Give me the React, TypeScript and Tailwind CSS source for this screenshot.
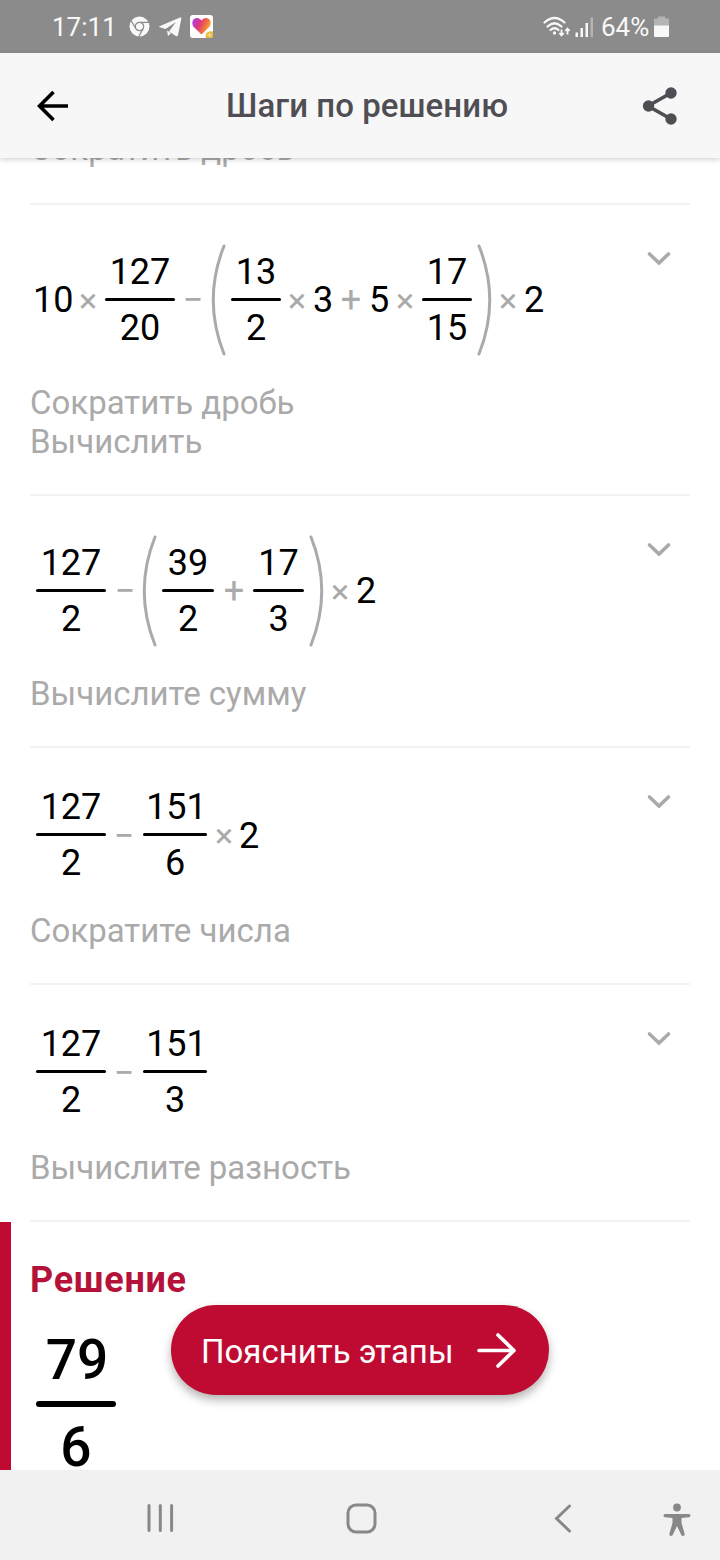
import { ReactNode } from 'react';

type Token =
  | { kind: 'num'; value: string; className: string }
  | { kind: 'op'; value: string; className: string }
  | { kind: 'frac'; top: string; bottom: string; className: string }
  | { kind: 'paren'; side: 'left' | 'right'; className: string };

interface Step {
  tokens: Token[];
  labels: string[];
}

const steps: Step[] = [
  {
    tokens: [
      { kind: 'num', value: '10', className: 'ml-[3px] w-10' },
      { kind: 'op', value: '×', className: 'ml-[5px] w-5' },
      { kind: 'frac', top: '127', bottom: '20', className: 'ml-[7px] w-[70px]' },
      { kind: 'op', value: '−', className: 'ml-2 w-5' },
      { kind: 'paren', side: 'left', className: 'ml-2' },
      { kind: 'frac', top: '13', bottom: '2', className: 'ml-[5px] w-[50px]' },
      { kind: 'op', value: '×', className: 'ml-1.5 w-5' },
      { kind: 'num', value: '3', className: 'ml-1.5 w-5' },
      { kind: 'op', value: '+', className: 'ml-2 w-5' },
      { kind: 'num', value: '5', className: 'ml-2 w-5' },
      { kind: 'op', value: '×', className: 'ml-1.5 w-5' },
      { kind: 'frac', top: '17', bottom: '15', className: 'ml-[7px] w-[50px]' },
      { kind: 'paren', side: 'right', className: 'ml-[5px]' },
      { kind: 'op', value: '×', className: 'ml-1.5 w-5' },
      { kind: 'num', value: '2', className: 'ml-1.5 w-5' },
    ],
    labels: ['Сократить дробь', 'Вычислить'],
  },
  {
    tokens: [
      { kind: 'frac', top: '127', bottom: '2', className: 'ml-1.5 w-[70px]' },
      { kind: 'op', value: '−', className: 'ml-[9px] w-5' },
      { kind: 'paren', side: 'left', className: 'ml-[7px]' },
      { kind: 'frac', top: '39', bottom: '2', className: 'ml-[5px] w-[52px]' },
      { kind: 'op', value: '+', className: 'ml-2.5 w-5' },
      { kind: 'frac', top: '17', bottom: '3', className: 'ml-[9px] w-[51px]' },
      { kind: 'paren', side: 'right', className: 'ml-[5px]' },
      { kind: 'op', value: '×', className: 'ml-1.5 w-5' },
      { kind: 'num', value: '2', className: 'ml-1.5 w-5' },
    ],
    labels: ['Вычислите сумму'],
  },
  {
    tokens: [
      { kind: 'frac', top: '127', bottom: '2', className: 'ml-1.5 w-[70px]' },
      { kind: 'op', value: '−', className: 'ml-2 w-5' },
      { kind: 'frac', top: '151', bottom: '6', className: 'ml-[9px] w-16' },
      { kind: 'op', value: '×', className: 'ml-[7px] w-5' },
      { kind: 'num', value: '2', className: 'ml-[5px] w-5' },
    ],
    labels: ['Сократите числа'],
  },
  {
    tokens: [
      { kind: 'frac', top: '127', bottom: '2', className: 'ml-1.5 w-[70px]' },
      { kind: 'op', value: '−', className: 'ml-2 w-5' },
      { kind: 'frac', top: '151', bottom: '3', className: 'ml-[9px] w-16' },
    ],
    labels: ['Вычислите разность'],
  },
];

function MathToken({ token }: { token: Token }) {
  switch (token.kind) {
    case 'num':
      return <span className={`${token.className} text-center`}>{token.value}</span>;
    case 'op':
      return (
        <span
          className={`${token.className} flex justify-center text-[#aaaaaa] ${
            token.value === '×' ? 'text-[34px]' : 'text-[36px]'
          }`}
        >
          {token.value}
        </span>
      );
    case 'frac':
      return (
        <span className={`${token.className} flex flex-col items-center`}>
          <span className={`h-[52px] leading-[53px] ${token.top === '151' ? 'pl-[3px]' : ''}`}>{token.top}</span>
          <span className="h-[3px] w-full rounded-full bg-black" />
          <span className="h-[54px] leading-[55px]">{token.bottom}</span>
        </span>
      );
    case 'paren':
      return (
        <svg className={token.className} width="15" height="112" viewBox="0 0 15 112" fill="none">
          <path
            d={token.side === 'left' ? 'M13 2Q-8.500 56 13 110' : 'M2 2Q23.500 56 2 110'}
            stroke="#aaaaaa"
            strokeWidth="3"
            strokeLinecap="round"
          />
        </svg>
      );
  }
}

function StepLabel({ children }: { children: ReactNode }) {
  return <p className="h-[39px] text-[33px] leading-[39px] text-[#aaaaaa]">{children}</p>;
}

function StepRow({ step }: { step: Step }) {
  const tall = step.tokens.some((t) => t.kind === 'paren');

  return (
    <section className="mx-[30px] border-b-2 border-[#f2f2f2] pt-10 pb-[33px]">
      <div className={`flex justify-between ${tall ? 'h-[110px]' : 'h-[95px]'}`}>
        <div className="flex items-center text-[36px] text-black">
          {step.tokens.map((token, i) => (
            <MathToken key={i} token={token} />
          ))}
        </div>
        <svg className="mt-[6px] mr-[18px]" width="26" height="16" viewBox="0 0 26 16" fill="none">
          <path d="M3.500 3L13 12L22.500 3" stroke="#aaaaaa" strokeWidth="3.600" strokeLinecap="round" />
        </svg>
      </div>
      <div className="mt-7">
        {step.labels.map((label) => (
          <StepLabel key={label}>{label}</StepLabel>
        ))}
      </div>
    </section>
  );
}

function StatusBar() {
  return (
    <div className="flex h-[53px] shrink-0 items-center justify-between bg-[#8b8b8b] pr-[51px] pl-[52px] text-[26px] text-[#f8f8f8]">
      <div className="flex items-center">
        <span className="w-[66px] pt-0.5">17:11</span>
        {/* chrome */}
        <svg className="ml-[11px]" width="21" height="21" viewBox="0 0 21 21" fill="none">
          <circle cx="10.500" cy="10.500" r="10" fill="#f8f8f8" />
          <g stroke="#8b8b8b" strokeWidth="1.200">
            <circle cx="10.500" cy="10.500" r="4.200" />
            <path d="M10.500 6.300H20M6.900 12.600L2 4.500M14.100 12.600L9.500 21" />
          </g>
        </svg>
        {/* telegram */}
        <svg className="ml-[9px]" width="23" height="20" viewBox="0 0 23 20" fill="#f8f8f8">
          <path d="M0.500 9.200L21 0.500Q22.800 0 22.300 2L19 18Q18.500 20 16.800 19L10 14.500L17 5L6.500 12L0.800 10.300Q-0.500 9.800 0.500 9.200Z" />
          <path d="M8 13.500L12 16.300L9 19Z" />
        </svg>
        {/* likee */}
        <svg className="ml-2" width="23" height="23" viewBox="0 0 23 23">
          <defs>
            <linearGradient id="heart" x1="0" y1="0.300" x2="1" y2="0.700">
              <stop offset="0" stopColor="#b03ce0" />
              <stop offset="0.350" stopColor="#e0357f" />
              <stop offset="0.650" stopColor="#f0703c" />
              <stop offset="1" stopColor="#f5c03c" />
            </linearGradient>
          </defs>
          <rect width="23" height="23" rx="3" fill="#ffffff" />
          <path d="M11.500 19.500L3.300 11.500Q1 7 4 4Q8 1.500 11.500 5.500Q15 1.500 19 4Q22 7 19.700 11.500Z" fill="url(#heart)" />
          <path d="M23 16.500V20Q23 23 20 23H15.500Q15 17 20 16.300Z" fill="#e9b93c" />
          <path d="M19.500 18V22M17.500 20H21.500" stroke="#f8e3a0" strokeWidth="1" />
        </svg>
      </div>
      <div className="flex items-center">
        <svg width="28" height="22" viewBox="0 0 28 22" fill="none" stroke="#f8f8f8">
          <g strokeWidth="2.200" strokeLinecap="round">
            <path d="M1.500 6.500Q11.500 -2.500 21.500 6.500" />
            <path d="M4.500 10.500Q11.500 4 18.500 10.500" />
            <path d="M7.500 14Q11.500 10.500 15.500 14" />
          </g>
          <circle cx="11.500" cy="17" r="1.700" fill="#f8f8f8" stroke="none" />
          <path d="M18.500 13.500V19M16.300 17L18.500 19.500L20.700 17M24.500 18.500V13M22.300 15L24.500 12.500L26.700 15" strokeWidth="1.800" />
        </svg>
        <svg className="ml-[4px]" width="19" height="20" viewBox="0 0 19 20" fill="#f8f8f8">
          <path d="M0.500 15.500H3V20H0.500ZM5.500 11H8V20H5.500ZM10.500 6H13V20H10.500Z" />
          <path d="M15.500 0.500H18V20H15.500Z" fill="#b4b4b4" />
        </svg>
        <span className="ml-[7px] w-[49px] pt-0.5">64%</span>
        <svg className="ml-1" width="15" height="21" viewBox="0 0 15 21">
          <path d="M4 0.500H11V2.500H14Q15 2.500 15 3.500V10H0V3.500Q0 2.500 1 2.500H4Z" fill="#b4b4b4" />
          <path d="M0 9.500H15V20Q15 21 14 21H1Q0 21 0 20Z" fill="#f8f8f8" />
        </svg>
      </div>
    </div>
  );
}

function Header() {
  return (
    <header className="z-10 flex h-[105px] shrink-0 items-center bg-[#f7f7f7] pr-[42px] pl-[37px] shadow-[0_2px_5px_rgba(0,0,0,0.16)]">
      <svg width="32" height="32" viewBox="0 0 32 32" fill="none" stroke="#000000" strokeWidth="3.600">
        <path d="M31 16H3M16.500 2L2.500 16L16.500 30" />
      </svg>
      <h1 className="ml-[157px] text-[33px] font-medium tracking-[0.05px] text-[#4f4e54]">Шаги по решению</h1>
      <svg className="ml-auto" width="36" height="40" viewBox="0 0 36 40" fill="#4f4e54">
        <path d="M29 7L6 20L29 33" fill="none" stroke="#4f4e54" strokeWidth="3.600" />
        <circle cx="29" cy="7" r="5.700" />
        <circle cx="6.500" cy="20" r="5.700" />
        <circle cx="29" cy="33" r="5.700" />
      </svg>
    </header>
  );
}

function Solution() {
  return (
    <section className="h-[300px] border-l-[11px] border-[#bf0b32] pt-[37px] pl-[19px]">
      <h2 className="h-[42px] text-[36px] leading-[42px] font-bold tracking-[0.7px] text-[#b5123a]">Решение</h2>
      <div className="mt-[15px] ml-1.5 flex w-20 flex-col items-center text-[55px] font-medium text-black">
        <span className="h-[85px] pl-0.5 leading-[88px]">79</span>
        <span className="h-1.5 w-full rounded-full bg-black" />
        <span className="h-[85px] leading-[81px]">6</span>
      </div>
    </section>
  );
}

function NavBar() {
  return (
    <nav className="flex h-[90px] shrink-0 items-center bg-[#f1f1f1] pt-1.5 pl-[146px]">
      <svg width="28" height="28" viewBox="0 0 28 28" stroke="#888888" strokeWidth="3" strokeLinecap="round">
        <path d="M3 1.500V26.500M14.300 1.500V26.500M25.600 1.500V26.500" />
      </svg>
      <svg className="ml-[172px]" width="31" height="31" viewBox="0 0 31 31" fill="none">
        <rect x="2" y="2" width="27" height="27" rx="8" stroke="#888888" strokeWidth="3" />
      </svg>
      <svg className="ml-[177px]" width="18" height="29" viewBox="0 0 18 29" fill="none">
        <path d="M15.500 2L2.500 14.500L15.500 27" stroke="#888888" strokeWidth="3" strokeLinecap="round" />
      </svg>
      <svg className="mt-1 ml-[91px]" width="28" height="34" viewBox="0 0 28 34" fill="#888888">
        <circle cx="14" cy="4.500" r="3.900" />
        <path d="M2 11H26Q27.500 11.200 27.500 12.500Q27.500 14 26 14.200L18.500 15V20L21.700 31Q21.800 33 20 33Q18.800 33 18.300 32L14 23L9.700 32Q9.200 33 8 33Q6.200 33 6.300 31L9.500 20V15L2 14.200Q0.500 14 0.500 12.500Q0.500 11.200 2 11Z" />
      </svg>
    </nav>
  );
}

export default function App() {
  return (
    <div className="relative flex h-[1560px] w-[720px] flex-col overflow-hidden bg-white font-['Roboto',sans-serif]">
      <StatusBar />
      <Header />
      <main className="min-h-0 flex-1 overflow-hidden">
        {/* tail of the step scrolled under the header */}
        <div className="mx-[30px] -mt-[29px] border-b-2 border-[#f2f2f2] pb-[35px]">
          <StepLabel>Сократить дробь</StepLabel>
        </div>
        {steps.map((step, i) => (
          <StepRow key={i} step={step} />
        ))}
        <Solution />
      </main>
      <button className="absolute top-[1305px] left-[171px] flex h-[90px] w-[378px] items-center justify-between rounded-full bg-[#bf0b32] pr-[33px] pl-[30px] text-[33px] text-white shadow-[0_5px_10px_rgba(0,0,0,0.3)]">
        <span className="pt-[3px]">Пояснить этапы</span>
        <svg width="40" height="36" viewBox="0 0 40 36" fill="none" stroke="#ffffff" strokeWidth="3.600" strokeLinecap="round" strokeLinejoin="round">
          <path d="M3 18.500H38M22 3L38 18.500L22 34" />
        </svg>
      </button>
      <NavBar />
    </div>
  );
}
